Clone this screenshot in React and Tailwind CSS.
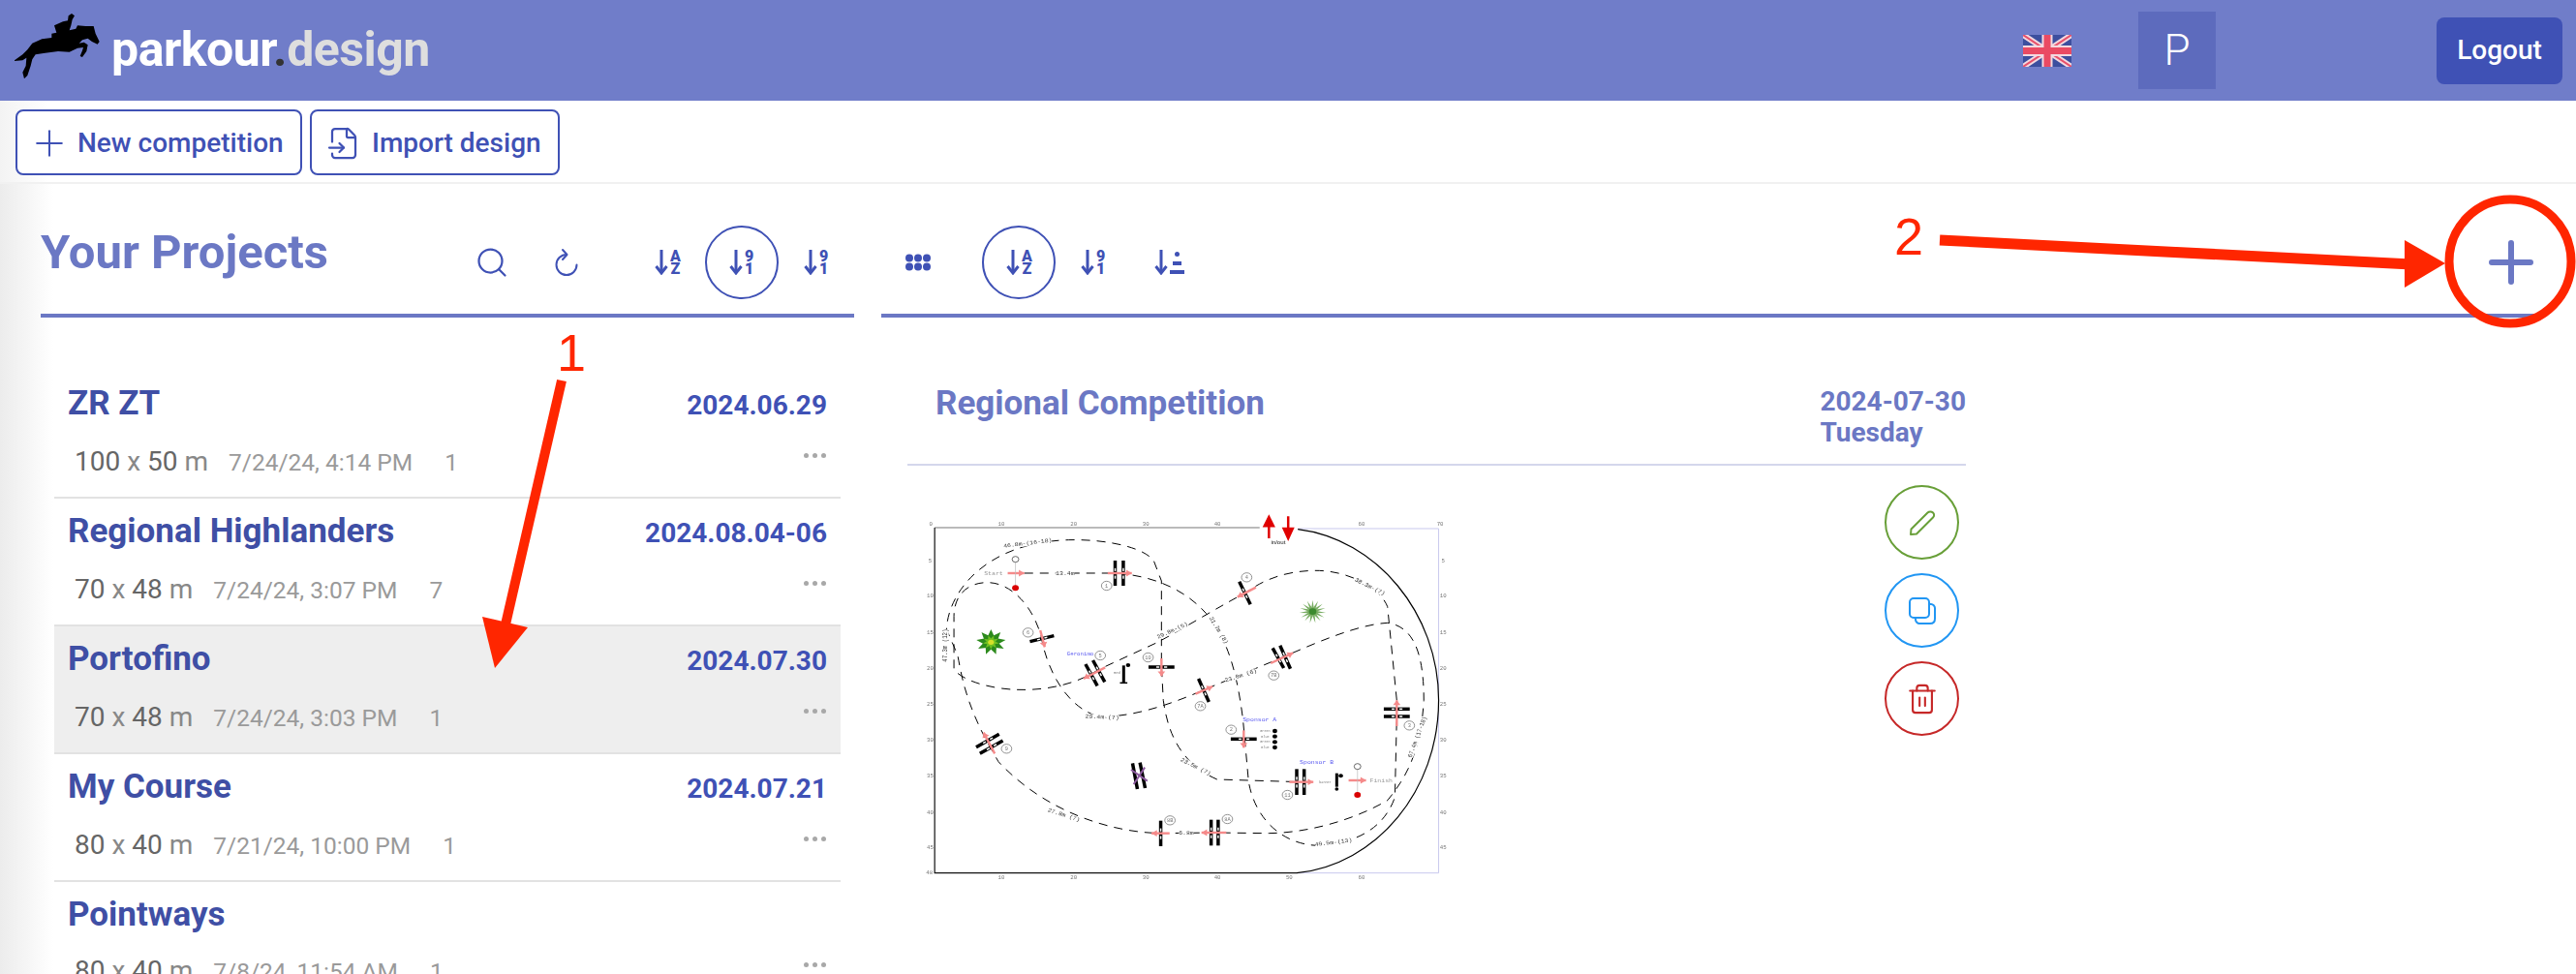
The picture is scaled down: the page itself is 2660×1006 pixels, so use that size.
import { Plus, FileInput, Search, Trash2 } from 'lucide-react';

const PROJECTS = [
  { name: 'ZR ZT', date: '2024.06.29', size: '100', depth: '50', updated: '7/24/24, 4:14 PM', count: 1 },
  { name: 'Regional Highlanders', date: '2024.08.04-06', size: '70', depth: '48', updated: '7/24/24, 3:07 PM', count: 7 },
  { name: 'Portofino', date: '2024.07.30', size: '70', depth: '48', updated: '7/24/24, 3:03 PM', count: 1, active: true },
  { name: 'My Course', date: '2024.07.21', size: '80', depth: '40', updated: '7/21/24, 10:00 PM', count: 1 },
  { name: 'Pointways', date: '', size: '80', depth: '40', updated: '7/8/24, 11:54 AM', count: 1 },
];

// fences: [bars from-to], arrow from-to
const FENCES = [
  { bars: [[605, 207, 605, 285], [627, 207, 627, 285]], arrow: [585, 246, 650, 246] },
  { bars: [[940, 272, 970, 343]], arrow: [985, 290, 935, 320] },
  { bars: [[375, 458, 440, 440]], arrow: [403, 423, 415, 475] },
  { bars: [[525, 528, 557, 595], [545, 516, 577, 583]], arrow: [578, 538, 520, 573] },
  { bars: [[695, 537, 765, 537]], arrow: [730, 510, 730, 565] },
  { bars: [[830, 573, 858, 645]], arrow: [822, 620, 868, 597] },
  { bars: [[1030, 478, 1060, 540], [1050, 470, 1078, 542]], arrow: [1025, 525, 1085, 493] },
  { bars: [[1330, 667, 1400, 667], [1330, 690, 1400, 690]], arrow: [1365, 720, 1365, 640] },
  { bars: [[917, 760, 987, 760]], arrow: [952, 733, 952, 787] },
  { bars: [[1095, 853, 1095, 933], [1115, 853, 1115, 933]], arrow: [1075, 893, 1140, 893] },
  { bars: [[864, 1010, 864, 1090], [883, 1010, 883, 1090]], arrow: [905, 1050, 838, 1050] },
  { bars: [[728, 1013, 728, 1092]], arrow: [752, 1052, 703, 1052] },
  { bars: [[230, 785, 292, 745], [240, 805, 302, 765]], arrow: [280, 805, 250, 740] },
];

const MARKS = [
  ['1', 582, 285], ['4', 960, 259], ['6', 370, 430], ['5', 565, 501], ['10', 694, 507], ['7B', 1033, 563],
  ['7A', 835, 658], ['3', 1399, 718], ['2', 918, 731], ['11', 1070, 933], ['8B', 753, 1012], ['8A', 908, 1008], ['9', 312, 790],
];

const DISTANCES = [
  ['46.8m-(16-18)', 370, 158, -8], ['13.4m', 470, 251, 0], ['38.3m-(7)', 1290, 292, 30], ['29.8m-(5)', 762, 428, -28],
  ['31.7m (8)', 880, 425, 62], ['47.3m (12)', 152, 470, -90], ['29.4m-(7)', 570, 697, 3], ['23.0m (6)', 946, 568, -20],
  ['23.5m (7)', 820, 850, 30], ['27.8m (7)', 465, 1000, 20], ['6.8m', 797, 1057, 0], ['49.5m-(13)', 1195, 1085, -8],
  ['67.4m (17-18)', 1425, 755, -72],
];

const TOP_RULER = [[108, '0'], [298, '10'], [493, '20'], [688, '30'], [881, '40'], [1270, '60'], [1482, '70']];
const BOTTOM_RULER = [[298, '10'], [493, '20'], [688, '30'], [881, '40'], [1075, '50'], [1270, '60']];
const SIDE_RULER = [[208, '5'], [318, '10'], [432, '15'], [542, '20'], [654, '25'], [764, '30'], [876, '35'], [988, '40'], [1098, '45']];

const LEAVES = [0, 40, 80, 120, 160, 200, 240, 280, 320];
const FINE_LEAVES = [0, 24, 48, 72, 96, 120, 144, 168, 192, 216, 240, 264, 288, 312, 336];

function PinkArrow({ a }) {
  const [x1, y1, x2, y2] = a;
  const ang = Math.atan2(y2 - y1, x2 - x1);
  const h = 18;
  const p = [
    [x2, y2],
    [x2 - h * Math.cos(ang - 0.6), y2 - h * Math.sin(ang - 0.6)],
    [x2 - h * Math.cos(ang + 0.6), y2 - h * Math.sin(ang + 0.6)],
  ].map((q) => q.join(',')).join(' ');
  return (
    <g>
      <line x1={x1} y1={y1} x2={x2} y2={y2} stroke="#f58a8a" strokeWidth="2.4" vectorEffect="non-scaling-stroke" />
      <polygon points={p} fill="#f58a8a" />
    </g>
  );
}

function CourseDrawing() {
  return (
    <svg width="600" height="420" viewBox="0 0 600 420" className="block blur-[0.3px]">
      <g transform="scale(0.38265 0.33333)">
        <g fill="none">
          <path d="M1098 108H1478V1175H1095" stroke="#c9c9ee" strokeWidth="1" vectorEffect="non-scaling-stroke" />
          <path d="M118 105H995" stroke="#777" strokeWidth="1" vectorEffect="non-scaling-stroke" />
          <path d="M118 105V1175H1095" stroke="#111" strokeWidth="1.2" vectorEffect="non-scaling-stroke" />
          <path d="M1098 110C1310 140 1478 370 1478 640C1478 920 1310 1150 1095 1175" stroke="#000" strokeWidth="1.2" vectorEffect="non-scaling-stroke" />
          <path
            d="M360 246L600 246C680 250 780 280 850 370C900 440 930 520 950 700L965 890C980 1000 1050 1085 1150 1090C1250 1085 1330 1040 1360 940L1365 690"
            stroke="#000" strokeWidth="1" strokeDasharray="9 7" vectorEffect="non-scaling-stroke"
          />
          <path
            d="M1365 640L1340 350C1320 290 1230 235 1140 238C1060 240 1000 270 960 305C900 340 800 410 720 460L560 545C500 590 420 610 340 607C280 605 200 585 170 545L170 380C170 310 210 275 260 275C320 275 380 340 405 440C420 540 470 660 560 690C660 695 780 640 850 605L1050 510C1150 460 1260 405 1340 400C1400 410 1438 470 1438 640C1430 800 1390 880 1340 950C1250 1010 1130 1050 1020 1052L870 1050L730 1052C600 1050 420 990 290 830L260 770C200 640 190 560 180 500L150 420C155 300 260 150 480 143C590 140 690 170 710 210L730 270L730 530L735 640C745 720 770 830 880 885L1105 893"
            stroke="#000" strokeWidth="1" strokeDasharray="9 7" vectorEffect="non-scaling-stroke"
          />
        </g>

        {TOP_RULER.map(([x, t]) => (
          <text key={t} x={x} y="100" fontSize="15" fill="#777" textAnchor="middle" fontFamily="Liberation Mono, monospace">{t}</text>
        ))}
        {BOTTOM_RULER.map(([x, t]) => (
          <text key={t} x={x} y="1195" fontSize="15" fill="#777" textAnchor="middle" fontFamily="Liberation Mono, monospace">{t}</text>
        ))}
        {SIDE_RULER.map(([y, t]) => (
          <g key={t}>
            <text x="106" y={y + 4} fontSize="15" fill="#777" textAnchor="middle" fontFamily="Liberation Mono, monospace">{t}</text>
            <text x="1490" y={y + 4} fontSize="15" fill="#777" textAnchor="middle" fontFamily="Liberation Mono, monospace">{t}</text>
          </g>
        ))}
        <text x="104" y="1178" fontSize="15" fill="#777" textAnchor="middle" fontFamily="Liberation Mono, monospace">48</text>

        {DISTANCES.map(([t, x, y, r]) => (
          <g key={t} transform={`translate(${x} ${y}) rotate(${r})`}>
            <rect x={-t.length * 5} y="-13" width={t.length * 10} height="17" fill="#fff" />
            <text fontSize="17" fill="#333" textAnchor="middle" fontFamily="Liberation Mono, monospace">{t}</text>
          </g>
        ))}

        {FENCES.map((f, i) => (
          <g key={i}>
            {f.bars.map(([x1, y1, x2, y2], j) => (
              <g key={j}>
                <line x1={x1} y1={y1} x2={x2} y2={y2} stroke="#000" strokeWidth="3.5" vectorEffect="non-scaling-stroke" />
                <line x1={x1 + (x2 - x1) * 0.3} y1={y1 + (y2 - y1) * 0.3} x2={x1 + (x2 - x1) * 0.42} y2={y1 + (y2 - y1) * 0.42} stroke="#fff" strokeWidth="1.5" vectorEffect="non-scaling-stroke" />
                <line x1={x1 + (x2 - x1) * 0.6} y1={y1 + (y2 - y1) * 0.6} x2={x1 + (x2 - x1) * 0.72} y2={y1 + (y2 - y1) * 0.72} stroke="#fff" strokeWidth="1.5" vectorEffect="non-scaling-stroke" />
              </g>
            ))}
            <PinkArrow a={f.arrow} />
          </g>
        ))}

        <line x1="652" y1="835" x2="665" y2="915" stroke="#000" strokeWidth="3.5" vectorEffect="non-scaling-stroke" />
        <line x1="672" y1="833" x2="686" y2="912" stroke="#000" strokeWidth="3.5" vectorEffect="non-scaling-stroke" />
        <line x1="648" y1="855" x2="692" y2="890" stroke="#8b5a9e" strokeWidth="2" vectorEffect="non-scaling-stroke" />
        <line x1="685" y1="848" x2="655" y2="900" stroke="#8b5a9e" strokeWidth="2" vectorEffect="non-scaling-stroke" />

        {MARKS.map(([t, x, y]) => (
          <g key={t}>
            <ellipse cx={x} cy={y} rx="14" ry="14" fill="#fff" stroke="#777" strokeWidth="0.8" vectorEffect="non-scaling-stroke" />
            <text x={x} y={y + 5} fontSize="14" fill="#777" textAnchor="middle" fontFamily="Liberation Mono, monospace">{t}</text>
          </g>
        ))}

        <PinkArrow a={[315, 246, 360, 246]} />
        <PinkArrow a={[1235, 888, 1282, 888]} />
        <line x1="336" y1="203" x2="336" y2="292" stroke="#bbb" strokeWidth="0.7" vectorEffect="non-scaling-stroke" />
        <line x1="1259" y1="845" x2="1259" y2="933" stroke="#bbb" strokeWidth="0.7" vectorEffect="non-scaling-stroke" />
        <circle cx="336" cy="203" r="9" fill="#fff" stroke="#444" strokeWidth="0.8" vectorEffect="non-scaling-stroke" />
        <circle cx="336" cy="292" r="9" fill="#d90000" />
        <circle cx="1259" cy="845" r="9" fill="#fff" stroke="#444" strokeWidth="0.8" vectorEffect="non-scaling-stroke" />
        <circle cx="1259" cy="933" r="9" fill="#d90000" />

        <text x="277" y="252" fontSize="17" fill="#999" textAnchor="middle" fontFamily="Liberation Mono, monospace">Start</text>
        <text x="1323" y="893" fontSize="17" fill="#999" textAnchor="middle" fontFamily="Liberation Mono, monospace">Finish</text>
        <text x="511" y="501" fontSize="15" fill="#5a5af0" textAnchor="middle" fontFamily="Liberation Mono, monospace">Geronimo</text>
        <text x="995" y="705" fontSize="17" fill="#5a5af0" textAnchor="middle" fontFamily="Liberation Mono, monospace">Sponsor A</text>
        <text x="1149" y="838" fontSize="17" fill="#5a5af0" textAnchor="middle" fontFamily="Liberation Mono, monospace">Sponsor B</text>
        <text x="1045" y="156" fontSize="16" fill="#111" textAnchor="middle" fontFamily="Liberation Sans, sans-serif">in/out</text>

        <path d="M1020 138V82M1008 100L1020 72L1032 100Z" stroke="#e00000" strokeWidth="2.5" fill="#e00000" vectorEffect="non-scaling-stroke" />
        <path d="M1072 70V126M1060 108L1072 138L1084 108Z" stroke="#e00000" strokeWidth="2.5" fill="#e00000" vectorEffect="non-scaling-stroke" />

        {/* red obstacle */}
        <circle cx="640" cy="531" r="6" fill="#000" />
        <line x1="628" y1="532" x2="628" y2="588" stroke="#000" strokeWidth="3" vectorEffect="non-scaling-stroke" />
        <line x1="618" y1="586" x2="638" y2="586" stroke="#000" strokeWidth="1.5" vectorEffect="non-scaling-stroke" />
        <text x="610" y="558" fontSize="10" fill="#777" textAnchor="middle" fontFamily="Liberation Mono, monospace">Red</text>

        {/* sponsor A poles */}
        {[['Green', 735], ['Blue', 752], ['Green', 769], ['Blue', 786]].map(([t, y], i) => (
          <g key={i}>
            <circle cx="1036" cy={y} r="6.5" fill="#000" />
            <text x="1010" y={y + 3} fontSize="9" fill="#777" textAnchor="middle" fontFamily="Liberation Mono, monospace">{t}</text>
          </g>
        ))}

        {/* sponsor B obstacle */}
        <line x1="1203" y1="866" x2="1203" y2="908" stroke="#000" strokeWidth="3" vectorEffect="non-scaling-stroke" />
        <circle cx="1214" cy="874" r="6" fill="#000" />
        <circle cx="1203" cy="915" r="5" fill="#000" />
        <text x="1172" y="896" fontSize="9" fill="#777" textAnchor="middle" fontFamily="Liberation Mono, monospace">banner</text>

        {/* trees */}
        <g transform="translate(270 460)">
          {LEAVES.map((a) => (
            <path key={a} d="M-13 -8L0 -40L13 -8Z" fill="#2c8a1c" transform={`rotate(${a})`} />
          ))}
          {LEAVES.map((a) => (
            <path key={a} d="M-7 -4L0 -22L7 -4Z" fill="#6fc020" transform={`rotate(${a + 20})`} />
          ))}
          <circle r="8" fill="#d5e02a" />
        </g>
        <g transform="translate(1138 365)">
          {FINE_LEAVES.map((a) => (
            <path key={a} d="M-4 -6L0 -36L4 -6Z" fill="#79ad63" transform={`rotate(${a})`} />
          ))}
          <circle r="10" fill="#3c8a2e" />
        </g>
      </g>
    </svg>
  );
}

function HorseLogo() {
  return (
    <svg width="120" height="90" viewBox="0 0 360 270" className="shrink-0">
      <path
        d="M45 178L70 160L85 145L100 125L130 112L160 108L160 95L175 92L168 70L195 58L210 55L212 40L222 33L231 40L224 52L220 70L215 85L235 80L240 70L265 72L290 72L296 95L308 120L302 128L285 120L272 110L255 115L245 125L260 122L272 130L268 150L255 168L248 165L255 148L258 138L240 140L215 152L180 150L140 155L110 160L100 175L95 195L85 225L75 235L70 215L80 195L82 170L70 178L45 180Z"
        fill="#000"
      />
    </svg>
  );
}

function UkFlag() {
  return (
    <svg width="50" height="33" viewBox="0 0 50 33" className="block">
      <rect width="50" height="33" rx="2" fill="#3c4f9f" />
      <path d="M0 0L50 33M50 0L0 33" stroke="#f3d9e0" strokeWidth="6" />
      <path d="M0 0L50 33M50 0L0 33" stroke="#e8506a" strokeWidth="2" />
      <path d="M25 0V33M0 16.5H50" stroke="#f3d9e0" strokeWidth="11" />
      <path d="M25 0V33M0 16.5H50" stroke="#ea4a63" strokeWidth="7" />
    </svg>
  );
}

function DownArrow() {
  return (
    <svg width="14" height="26" viewBox="0 0 14 26" className="shrink-0">
      <path d="M7 0V23" stroke="#3f51b5" strokeWidth="3" />
      <path d="M1.5 17L7 24L12.5 17" stroke="#3f51b5" strokeWidth="3" fill="none" />
    </svg>
  );
}

function SortIcon({ top, bottom }) {
  return (
    <div className="w-[28px] flex items-center gap-[2px] ml-[2px]">
      <DownArrow />
      <div className="flex flex-col items-center text-[16px] leading-[13px] font-black text-[#3f51b5]">
        <span>{top}</span>
        <span>{bottom}</span>
      </div>
    </div>
  );
}

function SortLinesIcon() {
  return (
    <div className="w-[30px] flex items-center gap-[2px] ml-[2px]">
      <DownArrow />
      <div className="flex flex-col items-center gap-[5px]">
        <span className="w-[5px] h-[5px] rounded-full bg-[#3f51b5]" />
        <span className="w-[9px] h-[4px] bg-[#3f51b5]" />
        <span className="w-[15px] h-[4px] bg-[#3f51b5]" />
      </div>
    </div>
  );
}

function GridIcon() {
  return (
    <svg width="26" height="18" viewBox="0 0 26 18">
      {[4, 13, 22].map((x) => (
        <g key={x} fill="#3f51b5">
          <circle cx={x} cy="4.5" r="4" />
          <circle cx={x} cy="13.5" r="4" />
        </g>
      ))}
    </svg>
  );
}

function RefreshIcon() {
  return (
    <svg width="26" height="30" viewBox="0 0 26 30" fill="none" stroke="#3f51b5" strokeWidth="2" strokeLinecap="round" strokeLinejoin="round">
      <path d="M13 7A10.5 10.5 0 1 0 23.5 17.5" />
      <path d="M9 2L13.5 7L9 12" />
    </svg>
  );
}

function Slot({ active, children }) {
  return (
    <div className={active
      ? 'w-[76px] h-[76px] mr-px flex items-center justify-center rounded-full border-2 border-[#3f51b5]'
      : 'w-[76px] h-[76px] mr-px flex items-center justify-center'}
    >
      {children}
    </div>
  );
}

function ProjectRow({ p }) {
  return (
    <div className={p.active ? 'h-[132px] px-[14px] border-b-[2px] border-[#e2e2e2] bg-[#eeeeee]' : 'h-[132px] px-[14px] border-b-[2px] border-[#e2e2e2]'}>
      <div className="flex justify-between items-baseline pt-[14px] leading-[40px]">
        <span className="text-[35px] font-bold text-[#3f4fa5]">{p.name}</span>
        <span className="text-[28px] font-bold text-[#3f51b5]">{p.date}</span>
      </div>
      <div className="flex justify-between items-start mt-[20px] pl-[7px] h-[36px]">
        <div className="flex items-baseline leading-[36px] whitespace-nowrap">
          <span className="text-[28px] text-[#666666]">
            {p.size} <span className="text-[#888888]">x</span> {p.depth} <span className="text-[#888888]">m</span>
          </span>
          <span className="ml-[21px] text-[24.5px] text-[#9a9a9a]">{p.updated}</span>
          <span className="ml-[33px] text-[24.5px] text-[#9a9a9a]">{p.count}</span>
        </div>
        <div className="flex gap-[4px] mt-[9px] mr-px">
          <span className="w-[5px] h-[5px] rounded-full bg-[#a8a8a8]" />
          <span className="w-[5px] h-[5px] rounded-full bg-[#a8a8a8]" />
          <span className="w-[5px] h-[5px] rounded-full bg-[#a8a8a8]" />
        </div>
      </div>
    </div>
  );
}

function RoundButton({ className, children }) {
  return (
    <button className={`w-[77px] h-[77px] rounded-full border-2 flex items-center justify-center ${className}`}>
      {children}
    </button>
  );
}

export default function App() {
  return (
    <div className="relative h-[1006px] overflow-hidden bg-white font-['Roboto',sans-serif]">
      <header className="h-[104px] flex items-center bg-[#707dc9]">
        <div className="-mt-[9px]"><HorseLogo /></div>
        <div className="-ml-[5px] -mt-[2px] text-[50px] font-bold tracking-[-0.5px] text-white">
          parkour<span className="text-[#333333]">.</span><span className="text-[#dedede]">design</span>
        </div>
        <div className="ml-auto mr-[69px]"><UkFlag /></div>
        <div className="w-[80px] h-[80px] mr-[228px] flex items-center justify-center bg-[#5d6bbd] text-[44px] font-light text-white">P</div>
        <button className="w-[130px] h-[69px] mr-[14px] rounded-[8px] bg-[#3f51b5] text-[28px] font-medium text-white">Logout</button>
      </header>

      <div className="h-[86px] pt-[9px] pl-[16px] flex gap-[8px] items-start border-b-[2px] border-[#f1f1f1] bg-[linear-gradient(90deg,#f3f3f3,#ffffff_50px)]">
        <button className="w-[296px] h-[68px] pl-[11px] pt-[1px] flex items-center gap-[7px] rounded-[8px] border-2 border-[#3f51b5] bg-white text-[28px] font-medium text-[#3f51b5]">
          <Plus size={44} strokeWidth={1.1} />
          New competition
        </button>
        <button className="w-[258px] h-[68px] pl-[15px] pt-[1px] flex items-center gap-[11px] rounded-[8px] border-2 border-[#3f51b5] bg-white text-[28px] font-medium text-[#3f51b5]">
          <FileInput size={36} strokeWidth={1.5} />
          Import design
        </button>
      </div>

      <main className="flex h-[816px] bg-[linear-gradient(90deg,#ececec,#ffffff_55px)]">
        <section className="w-[840px] ml-[42px] shrink-0">
          <div className="h-[138px] pt-[43px] flex items-start border-b-[4px] border-[#6b78c4]">
            <h1 className="text-[49px] leading-[56px] font-bold text-[#6b78c4]">Your Projects</h1>
            <div className="ml-auto flex">
              <Slot><Search size={36} strokeWidth={1.5} color="#3f51b5" /></Slot>
              <Slot><RefreshIcon /></Slot>
              <div className="w-[27px]" />
              <Slot><SortIcon top="A" bottom="Z" /></Slot>
              <Slot active><SortIcon top="9" bottom="1" /></Slot>
              <Slot><SortIcon top="9" bottom="1" /></Slot>
            </div>
          </div>
          <div className="mx-[14px] mt-[55px]">
            {PROJECTS.map((p) => <ProjectRow key={p.name} p={p} />)}
          </div>
        </section>

        <section className="ml-[28px] w-[1707px] shrink-0">
          <div className="h-[138px] pt-[43px] flex items-start border-b-[4px] border-[#6b78c4]">
            <Slot><GridIcon /></Slot>
            <div className="w-[27px]" />
            <Slot active><SortIcon top="A" bottom="Z" /></Slot>
            <Slot><SortIcon top="9" bottom="1" /></Slot>
            <Slot><SortLinesIcon /></Slot>
            <div className="ml-auto w-[48px] h-[76px] flex items-center justify-center">
              <svg width="46" height="46" viewBox="0 0 46 46" stroke="#6b78c4" strokeWidth="6" strokeLinecap="round">
                <path d="M23 3V43M3 23H43" />
              </svg>
            </div>
          </div>

          <div className="ml-[27px] w-[1093px] mt-[55px]">
            <div className="h-[98px] pl-[29px] flex justify-between items-start border-b-2 border-[#d4d7ec] text-[#6b78c4] font-bold">
              <div className="pt-[14px] text-[35px] leading-[40px]">Regional Competition</div>
              <div className="pt-[16px] text-[28px] leading-[32px]">
                2024-07-30
                <div>Tuesday</div>
              </div>
            </div>
            <div className="flex justify-between">
              <div className="-ml-[17px] mt-[29px]"><CourseDrawing /></div>
              <div className="mt-[20px] mr-[7px] flex flex-col gap-[14px]">
                <RoundButton className="border-[#689f38] text-[#689f38]">
                  <svg width="30" height="30" viewBox="0 0 30 30" fill="none" stroke="currentColor" strokeWidth="2" strokeLinejoin="round">
                    <path d="M3 27L3.5 21.5L20.5 4.5C22 3 24.5 3 26 4.5C27.5 6 27.5 8 26 9.5L9 26.5Z" />
                  </svg>
                </RoundButton>
                <RoundButton className="border-[#2196f3] text-[#2196f3]">
                  <svg width="30" height="30" viewBox="0 0 30 30" fill="none" stroke="currentColor" strokeWidth="2">
                    <rect x="2" y="2" width="20" height="20" rx="4" />
                    <path d="M8 22V24C8 26 10 28 12 28H23C26 28 28 26 28 23V12C28 10 26 8 24 8H22" />
                  </svg>
                </RoundButton>
                <RoundButton className="border-[#c62828] text-[#c62828]">
                  <Trash2 size={34} strokeWidth={1.5} />
                </RoundButton>
              </div>
            </div>
          </div>
        </section>
      </main>

      {/* red annotations drawn over the page */}
      <svg width="2660" height="1006" viewBox="0 0 2660 1006" className="absolute left-0 top-0 pointer-events-none">
        <text x="590" y="383" fontSize="54" fill="#ff2600" textAnchor="middle" fontFamily="Liberation Sans, sans-serif">1</text>
        <line x1="580" y1="393" x2="522" y2="645" stroke="#ff2600" strokeWidth="10" />
        <polygon points="498,637 545,648 511,690" fill="#ff2600" />
        <text x="1971" y="263" fontSize="54" fill="#ff2600" textAnchor="middle" fontFamily="Liberation Sans, sans-serif">2</text>
        <line x1="2003" y1="248" x2="2490" y2="273" stroke="#ff2600" strokeWidth="11" />
        <polygon points="2483,248 2525,272 2483,297" fill="#ff2600" />
        <ellipse cx="2592" cy="270" rx="63" ry="64" fill="none" stroke="#ff2600" strokeWidth="9" />
      </svg>
    </div>
  );
}
